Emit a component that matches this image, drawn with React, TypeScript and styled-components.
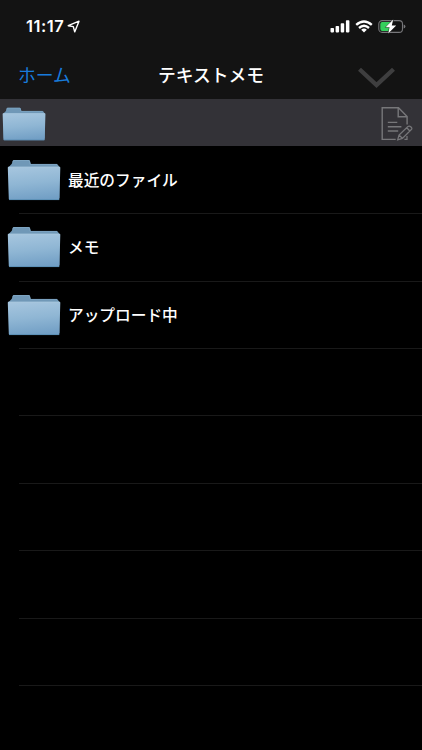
import React from "react";
import styled, { createGlobalStyle } from "styled-components";

const GlobalStyle = createGlobalStyle`
  * { box-sizing: border-box; }
  body { margin: 0; background: #000; }
`;

const Screen = styled.div`
  width: 422px;
  height: 750px;
  overflow: hidden;
  display: flex;
  flex-direction: column;
  background: #000;
  color: #fff;
  font-family: "Noto Sans CJK JP", sans-serif;
`;

const Header = styled.header`
  flex: 0 0 99px;
  display: flex;
  flex-direction: column;
  background: #131313;
`;

const StatusBar = styled.div`
  height: 50px;
  padding: 2px 16px 0 26px;
  display: flex;
  align-items: center;
  justify-content: space-between;
`;

const StatusGroup = styled.div<{ $gap: number }>`
  display: flex;
  align-items: center;
  gap: ${(p) => p.$gap}px;
`;

const Time = styled.span`
  font: 600 16.5px/20px Inter, sans-serif;
  letter-spacing: 0.5px;
`;

const NavBar = styled.nav`
  height: 48px;
  padding: 0 27px 0 18px;
  display: grid;
  grid-template-columns: 1fr auto 1fr;
  align-items: center;
`;

const BackLink = styled.span`
  font-size: 17.8px;
  line-height: 24px;
  color: #187bdc;
`;

const Title = styled.h1`
  margin: 0;
  padding-left: 9px;
  font-size: 17.8px;
  font-weight: 500;
  line-height: 24px;
`;

const Chevron = styled.svg`
  justify-self: end;
  margin-top: 8px;
`;

const Toolbar = styled.div`
  flex: 0 0 47px;
  padding: 2px 9px 0 2px;
  display: flex;
  align-items: center;
  justify-content: space-between;
  background: #333237;
`;

const FileList = styled.ul`
  flex: 1;
  margin: 0;
  padding: 0.8px 0 0;
  list-style: none;
`;

const Row = styled.li`
  height: 67.4px;
  padding: 0 0 1px 7px;
  display: flex;
  align-items: center;
  gap: 7px;
  background: linear-gradient(#191919, #191919) 19px 100% / 100% 1px no-repeat;
`;

const RowLabel = styled.span`
  font-size: 15.7px;
  font-weight: 500;
  line-height: 24px;
`;

function FolderIcon({ width, height }: { width: number; height: number }) {
  return (
    <svg width={width} height={height} viewBox="0 0 54 42" preserveAspectRatio="none">
      <defs>
        <linearGradient id="folderFront" x1="0.3" y1="0" x2="0.45" y2="1">
          <stop offset="0" stopColor="#a5c5de" />
          <stop offset="0.5" stopColor="#8fb6d4" />
          <stop offset="1" stopColor="#729fc5" />
        </linearGradient>
      </defs>
      <path d="M1.8 8 4.8 4.8 5.7 2Q6 1 7 1H21.5Q22.7 1 23 2L23.8 5H49.5Q50.6 5 51 6L52.4 8V39H2Z" fill="#7098b7" />
      <path d="M5.8 3.3 6.4 1.5H22.3L23.2 5.4H50" fill="none" stroke="#82a9c6" strokeWidth="0.7" />
      <path d="M.8 8.7Q.7 7.8 1.7 7.8H52.3Q53.4 7.8 53.3 8.7L52.4 40Q52.3 41 51.5 41H2.8Q1.9 41 1.8 40Z" fill="url(#folderFront)" />
      <path d="M1.5 8.2H52.6" stroke="#abc9df" strokeWidth="0.6" />
      <path d="M2 40.6H52.2" stroke="#568bb1" strokeWidth="0.8" />
    </svg>
  );
}

function LocationIcon() {
  return (
    <svg width="13" height="13" viewBox="0 0 13 13" fill="none" stroke="#fff" strokeWidth="1.4" strokeLinejoin="round">
      <path d="M1.2 5.7 12 1.2 7.7 11.9 6.3 6.6Z" />
    </svg>
  );
}

function SignalIcon() {
  return (
    <svg width="20" height="13" viewBox="0 0 20 13" fill="#fff">
      <rect x=".5" y="8" width="3.5" height="4.4" rx=".8" />
      <rect x="5.6" y="6" width="3.5" height="6.4" rx=".8" />
      <rect x="10.7" y="3.2" width="3.5" height="9.2" rx=".8" />
      <rect x="15.9" y=".3" width="3.5" height="12.1" rx=".8" />
    </svg>
  );
}

function WifiIcon() {
  return (
    <svg width="18" height="13" viewBox="0 0 18 13" fill="none" stroke="#fff" strokeWidth="2.4">
      <path d="M1.2 4.9Q9-1.9 16.8 4.9" />
      <path d="M4 8Q9 3.6 14 8" />
      <path d="M9 12.6 6.2 9.7Q9 7.4 11.8 9.7Z" fill="#fff" stroke="none" />
    </svg>
  );
}

function BatteryIcon() {
  return (
    <svg width="28" height="15" viewBox="0 0 28 15">
      <rect x=".8" y="1.6" width="23.7" height="11.8" rx="3.4" fill="none" stroke="#77777a" strokeWidth="1.1" />
      <path d="M25.7 5.5Q27.4 6.1 27.4 7.5T25.7 9.5Z" fill="#77777a" />
      <path d="M4.2 3.1H12V11.9H4.2Q2.3 11.9 2.3 10V5Q2.3 3.1 4.2 3.1Z" fill="#35cf5c" />
      <path d="M15.2.6 7.6 8.3H11.6L10.2 14.4 18.2 6.4H13.8Z" fill="#fff" stroke="#131313" strokeWidth="0.8" paintOrder="stroke" />
    </svg>
  );
}

function EditDocumentIcon() {
  return (
    <svg width="33" height="36" viewBox="0 0 33 36" fill="none" stroke="#77777a" strokeWidth="1.4">
      <path d="M15.7 33.4H2.2V1.7H18.5L27.1 10.5V18.5" />
      <path d="M18.2 1.9V10.8H27" />
      <path d="M7.8 16.4H17.3M7.8 20.8H21.4M7.8 25H18.2" />
      <path d="M17.7 33.8 19 29 28 20.5Q29.3 19.4 31 21T31.1 23.8L22.4 32.4ZM26.8 21.8 29.8 25M19 29 22.3 32.2M24.4 33.4H27V30" strokeWidth="1.25" />
    </svg>
  );
}

const labels = ["最近のファイル", "メモ", "アップロード中", "", "", "", "", ""];

export default function App() {
  return (
    <Screen>
      <GlobalStyle />
      <Header>
        <StatusBar>
          <StatusGroup $gap={3}>
            <Time>11:17</Time>
            <LocationIcon />
          </StatusGroup>
          <StatusGroup $gap={5}>
            <SignalIcon />
            <WifiIcon />
            <BatteryIcon />
          </StatusGroup>
        </StatusBar>
        <NavBar>
          <BackLink>ホーム</BackLink>
          <Title>テキストメモ</Title>
          <Chevron width="37" height="22" viewBox="0 0 37 22">
            <path d="M1.5 2.2 18.5 18 35.5 2.2" fill="none" stroke="#3e3e3f" strokeWidth="4.3" />
          </Chevron>
        </NavBar>
      </Header>
      <Toolbar>
        <FolderIcon width={44} height={34} />
        <EditDocumentIcon />
      </Toolbar>
      <FileList>
        {labels.map((label, i) => (
          <Row key={i}>
            {label && (
              <>
                <FolderIcon width={54} height={42} />
                <RowLabel>{label}</RowLabel>
              </>
            )}
          </Row>
        ))}
      </FileList>
    </Screen>
  );
}
